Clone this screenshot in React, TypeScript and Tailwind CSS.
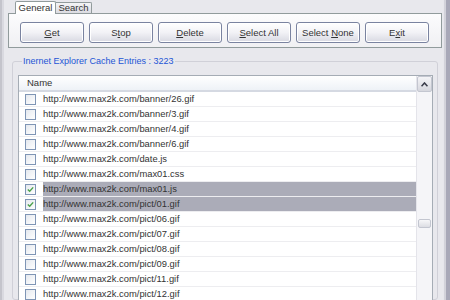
import React from "react";

const rows = [
  { url: "http://www.max2k.com/banner/26.gif", checked: false },
  { url: "http://www.max2k.com/banner/3.gif", checked: false },
  { url: "http://www.max2k.com/banner/4.gif", checked: false },
  { url: "http://www.max2k.com/banner/6.gif", checked: false },
  { url: "http://www.max2k.com/date.js", checked: false },
  { url: "http://www.max2k.com/max01.css", checked: false },
  { url: "http://www.max2k.com/max01.js", checked: true },
  { url: "http://www.max2k.com/pict/01.gif", checked: true },
  { url: "http://www.max2k.com/pict/06.gif", checked: false },
  { url: "http://www.max2k.com/pict/07.gif", checked: false },
  { url: "http://www.max2k.com/pict/08.gif", checked: false },
  { url: "http://www.max2k.com/pict/09.gif", checked: false },
  { url: "http://www.max2k.com/pict/11.gif", checked: false },
  { url: "http://www.max2k.com/pict/12.gif", checked: false },
];

// label split around the mnemonic letter
const buttons: [string, string, string][] = [
  ["", "G", "et"],
  ["S", "t", "op"],
  ["", "D", "elete"],
  ["", "S", "elect All"],
  ["Select ", "N", "one"],
  ["E", "x", "it"],
];

function CheckBox({ checked }: { checked: boolean }) {
  return (
    <div className="w-[11px] h-[11px] border border-[#7f95b5] bg-gradient-to-br from-[#e4e8ee] to-white flex items-center justify-center shrink-0">
      {checked && (
        <svg width="7" height="7" viewBox="0 0 7 7">
          <path d="M0.8 3.4 L2.7 5.3 L6.2 1.4" stroke="#4aa04a" strokeWidth="1.4" fill="none" />
        </svg>
      )}
    </div>
  );
}

export default function App() {
  return (
    <div
      className="w-[450px] h-[300px] overflow-hidden flex bg-[#e8e8ed] text-[#333]"
      style={{ fontFamily: '"Liberation Sans", Arial, sans-serif' }}
    >
      {/* left window frame */}
      <div className="w-[4px] shrink-0 bg-[#d9d9e0] border-l-2 border-[#c4c4cc]" />

      <div className="flex-1 flex flex-col min-w-0">
        {/* tabs */}
        <div className="flex items-end h-[13px] ml-[11px] text-[9.5px]">
          <div className="h-[13px] w-[41px] bg-white border border-b-0 border-[#919b9c] rounded-t-[2px] flex items-center justify-center leading-none relative top-[1px]">
            General
          </div>
          <div className="h-[11px] w-[36px] bg-gradient-to-b from-[#f4f4f6] to-[#dcdce2] border border-b-0 border-l-0 border-[#919b9c] rounded-tr-[2px] flex items-center justify-center leading-none">
            Search
          </div>
        </div>

        {/* tab panel */}
        <div className="ml-[4px] mr-[1px] h-[35px] border border-[#919b9c] bg-gradient-to-b from-[#fcfcfd] to-[#f0f0f3] flex gap-[5px] pl-[11px] pt-[8px]">
          {buttons.map(([a, u, b], i) => (
            <div
              key={i}
              className="w-[64px] h-[21px] rounded-[3px] border border-[#7a83a0] bg-gradient-to-b from-white via-[#f2f2f6] to-[#d8d9e2] shadow-[inset_0_0_0_1px_#ffffff] flex items-center justify-center text-[9.5px] leading-none whitespace-pre"
            >
              <span>
                {a}
                <span className="underline">{u}</span>
                {b}
              </span>
            </div>
          ))}
        </div>

        {/* group box */}
        <fieldset className="mt-[7px] ml-[8px] mr-[5px] border border-[#d0d0d8] rounded-[3px] pl-[5px] pr-[4px] pt-[8px] flex-1 min-h-0">
          <legend className="ml-[4px] px-[1px] text-[9px] text-[#1d55d6] leading-[12px]">
            Inernet Explorer Cache Entries : 3223
          </legend>

          <div className="h-[240px] border border-[#a5acb5] bg-white flex">
            <div className="flex-1 flex flex-col">
              <div className="h-[16px] bg-gradient-to-b from-white to-[#eef2f7] border-b-2 border-[#d5d9e2] flex items-center pl-[8px] text-[9.5px] leading-none">
                Name
              </div>
              {rows.map((r, i) => (
                <div
                  key={i}
                  className={`h-[15px] flex items-center border-b border-[#ededf0] ${r.checked ? "bg-[#abacb8]" : ""}`}
                >
                  <div className="w-[24px] pl-[6px] flex items-center bg-white h-full">
                    <CheckBox checked={r.checked} />
                  </div>
                  <span className="text-[9.4px] leading-none">{r.url}</span>
                </div>
              ))}
            </div>

            {/* scrollbar */}
            <div className="w-[16px] bg-[#f5f5f8] border-l border-[#e4e4ea] flex flex-col">
              <div className="h-[16px] bg-gradient-to-b from-[#f4f4f7] to-[#d6d7de] border border-[#c3c6d0] rounded-[2px] flex items-center justify-center">
                <svg width="7" height="5" viewBox="0 0 7 5">
                  <path d="M0.5 4.3 L3.5 1 L6.5 4.3" stroke="#3a3d4a" strokeWidth="1.6" fill="none" />
                </svg>
              </div>
              <div className="h-[127px]" />
              <div className="h-[9px] mx-[1px] bg-gradient-to-b from-[#f7f7f9] to-[#dcdde3] border border-[#c3c6d0] rounded-[2px]" />
              <div className="flex-1" />
              <div className="h-[14px] bg-gradient-to-b from-[#f4f4f7] to-[#d6d7de] border border-[#c3c6d0] rounded-[2px] flex items-start pt-[2px] justify-center">
                <svg width="7" height="5" viewBox="0 0 7 5">
                  <path d="M0.5 0.7 L3.5 4 L6.5 0.7" stroke="#3a3d4a" strokeWidth="1.6" fill="none" />
                </svg>
              </div>
            </div>
          </div>
        </fieldset>
      </div>

      {/* right window frame */}
      <div className="w-[7px] shrink-0 bg-[#d2d2da] border-l border-[#e6e6ec] border-r-[4px] border-r-[#a8a8b8]" />
    </div>
  );
}
